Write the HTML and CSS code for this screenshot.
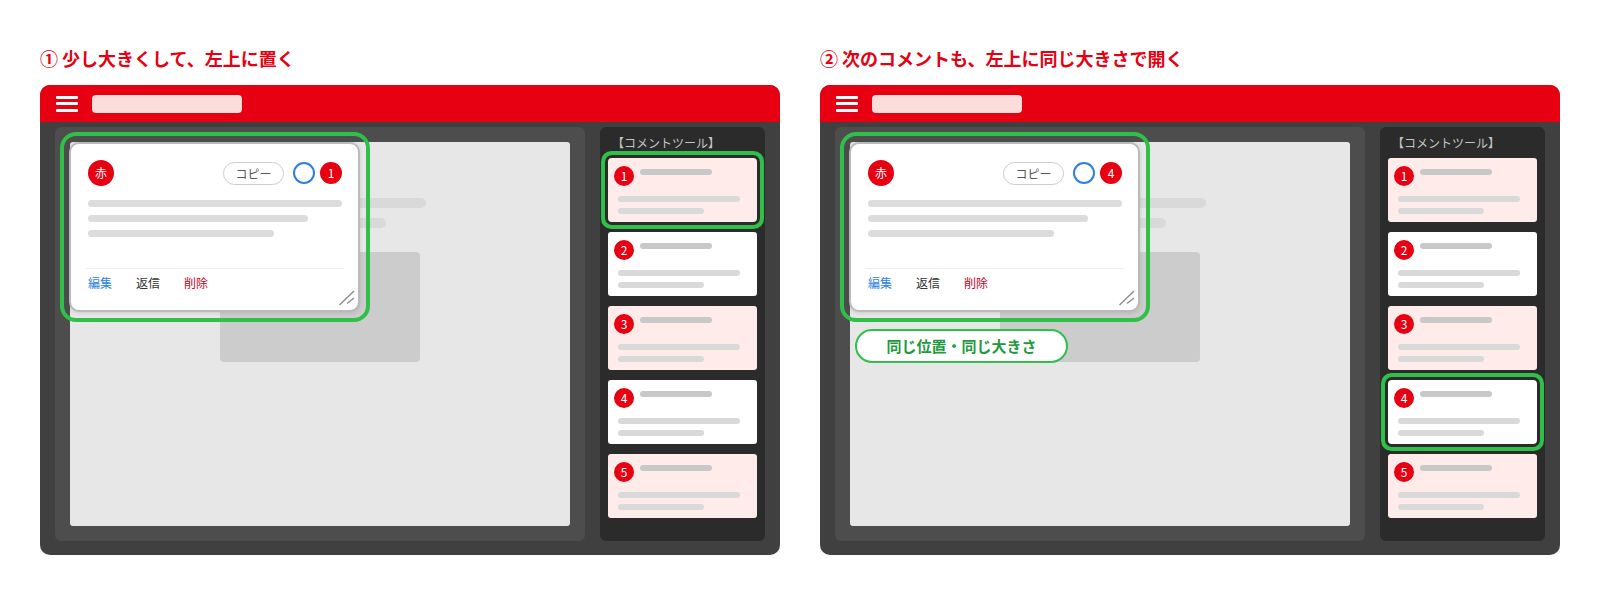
FILE: index.html
```html
<!DOCTYPE html>
<html lang="ja">
  <head>
    <meta charset="UTF-8" />
    <title>コメントツール</title>
    <link rel="stylesheet" href="styles.css">
  </head>
  <body>
    <div class="steps">
      <!-- step 1 -->
      <section class="step">
        <h2 class="step-title">① 少し大きくして、左上に置く</h2>
        <div class="frame">
          <header class="topbar">
            <div class="burger"><span></span><span></span><span></span></div>
            <div class="search"></div>
          </header>
          <div class="workspace">
            <main class="main">
              <div class="page">
                <div class="page-line page-line-a"></div>
                <div class="page-line page-line-b"></div>
                <div class="page-block"></div>
              </div>
              <div class="highlight">
                <div class="popup">
                  <div class="popup-head">
                    <span class="avatar">赤</span>
                    <span class="copy">コピー</span>
                    <span class="ring"></span>
                    <span class="badge badge-big">1</span>
                  </div>
                  <div class="popup-line popup-line-a"></div>
                  <div class="popup-line popup-line-b"></div>
                  <div class="popup-line popup-line-c"></div>
                  <div class="popup-rule"></div>
                  <div class="actions">
                    <span class="act-edit">編集</span>
                    <span class="act-reply">返信</span>
                    <span class="act-delete">削除</span>
                  </div>
                  <svg class="grip" width="16" height="16" viewBox="0 0 16 16">
                    <path d="M0.5 15L15 1M8 13.5L15 8" stroke="#8f8f8f" stroke-width="1.5" fill="none" />
                  </svg>
                </div>
              </div>
            </main>
            <aside class="sidebar">
              <div class="sidebar-title">【コメントツール】</div>
              <div class="card pink active">
                <span class="badge">1</span><div class="card-head"></div>
                <div class="card-line"></div><div class="card-line short"></div>
              </div>
              <div class="card">
                <span class="badge">2</span><div class="card-head"></div>
                <div class="card-line"></div><div class="card-line short"></div>
              </div>
              <div class="card pink">
                <span class="badge">3</span><div class="card-head"></div>
                <div class="card-line"></div><div class="card-line short"></div>
              </div>
              <div class="card">
                <span class="badge">4</span><div class="card-head"></div>
                <div class="card-line"></div><div class="card-line short"></div>
              </div>
              <div class="card pink">
                <span class="badge">5</span><div class="card-head"></div>
                <div class="card-line"></div><div class="card-line short"></div>
              </div>
            </aside>
          </div>
        </div>
      </section>

      <!-- step 2 -->
      <section class="step">
        <h2 class="step-title">② 次のコメントも、左上に同じ大きさで開く</h2>
        <div class="frame">
          <header class="topbar">
            <div class="burger"><span></span><span></span><span></span></div>
            <div class="search"></div>
          </header>
          <div class="workspace">
            <main class="main">
              <div class="page">
                <div class="page-line page-line-a"></div>
                <div class="page-line page-line-b"></div>
                <div class="page-block"></div>
              </div>
              <div class="highlight">
                <div class="popup">
                  <div class="popup-head">
                    <span class="avatar">赤</span>
                    <span class="copy">コピー</span>
                    <span class="ring"></span>
                    <span class="badge badge-big">4</span>
                  </div>
                  <div class="popup-line popup-line-a"></div>
                  <div class="popup-line popup-line-b"></div>
                  <div class="popup-line popup-line-c"></div>
                  <div class="popup-rule"></div>
                  <div class="actions">
                    <span class="act-edit">編集</span>
                    <span class="act-reply">返信</span>
                    <span class="act-delete">削除</span>
                  </div>
                  <svg class="grip" width="16" height="16" viewBox="0 0 16 16">
                    <path d="M0.5 15L15 1M8 13.5L15 8" stroke="#8f8f8f" stroke-width="1.5" fill="none" />
                  </svg>
                </div>
              </div>
              <div class="same-label">同じ位置・同じ大きさ</div>
            </main>
            <aside class="sidebar">
              <div class="sidebar-title">【コメントツール】</div>
              <div class="card pink">
                <span class="badge">1</span><div class="card-head"></div>
                <div class="card-line"></div><div class="card-line short"></div>
              </div>
              <div class="card">
                <span class="badge">2</span><div class="card-head"></div>
                <div class="card-line"></div><div class="card-line short"></div>
              </div>
              <div class="card pink">
                <span class="badge">3</span><div class="card-head"></div>
                <div class="card-line"></div><div class="card-line short"></div>
              </div>
              <div class="card active">
                <span class="badge">4</span><div class="card-head"></div>
                <div class="card-line"></div><div class="card-line short"></div>
              </div>
              <div class="card pink">
                <span class="badge">5</span><div class="card-head"></div>
                <div class="card-line"></div><div class="card-line short"></div>
              </div>
            </aside>
          </div>
        </div>
      </section>
    </div>
  </body>
</html>
```
FILE: styles.css
```css
:root {
  --red: #e60012;
  --green: #30c04a;
  --sidebar: #2b2b2b;
}
* {
  margin: 0;
  padding: 0;
  box-sizing: border-box;
}
body {
  font-family: "Noto Sans CJK JP", "Noto Sans", sans-serif;
  background: #ffffff;
  color: #333333;
}
.steps {
  display: flex;
  gap: 40px;
  padding: 45px 40px 0;
}
.step {
  width: 740px;
}
.step-title {
  color: var(--red);
  font-size: 18px;
  font-weight: 700;
  line-height: 26px;
  margin-bottom: 14px;
}
.frame {
  height: 470px;
  background: #404040;
  border-radius: 10px;
  overflow: hidden;
}
.topbar {
  height: 37px;
  background: var(--red);
  display: flex;
  align-items: center;
  padding-left: 16px;
  gap: 14px;
}
.burger {
  width: 22px;
  display: flex;
  flex-direction: column;
  gap: 3.5px;
}
.burger span {
  height: 3px;
  background: #ffffff;
  border-radius: 1px;
}
.search {
  width: 150px;
  height: 18px;
  background: #fddcdc;
  border-radius: 4px;
}
.workspace {
  display: flex;
  gap: 15px;
  padding: 5px 15px 14px;
}
.main {
  position: relative;
  width: 530px;
  height: 414px;
  background: #4d4d4d;
  border-radius: 6px;
  padding: 15px;
}
.page {
  height: 384px;
  background: #e7e7e7;
  border-radius: 3px;
  padding: 56px 0 0 150px;
}
.page-line {
  height: 10px;
  background: #d9d9d9;
  border-radius: 5px;
  margin-bottom: 10px;
}
.page-line-a {
  width: 206px;
}
.page-line-b {
  width: 166px;
}
.page-block {
  width: 200px;
  height: 110px;
  margin-top: 24px;
  background: #cccccc;
  border-radius: 4px;
}
.highlight {
  position: absolute;
  left: 5px;
  top: 5px;
  width: 310px;
  height: 190px;
  border: 4px solid var(--green);
  border-radius: 16px;
  padding: 6px 5px;
}
.popup {
  position: relative;
  width: 291px;
  height: 170px;
  background: #ffffff;
  border: 2px solid #bababa;
  border-radius: 10px;
  box-shadow: 0 1px 4px rgba(0, 0, 0, 0.12);
  padding: 16px 16px 0 17px;
}
.popup-head {
  display: flex;
  align-items: center;
  height: 26px;
}
.avatar {
  width: 26px;
  height: 26px;
  border-radius: 50%;
  background: var(--red);
  color: #ffffff;
  font-size: 12px;
  line-height: 26px;
  text-align: center;
  margin-right: auto;
}
.copy {
  width: 61px;
  height: 23px;
  border: 1px solid #cccccc;
  border-radius: 12px;
  font-size: 12px;
  line-height: 21px;
  text-align: center;
  color: #555555;
}
.ring {
  width: 22px;
  height: 22px;
  border: 2px solid #2f7fe0;
  border-radius: 50%;
  margin: 0 5px 0 9px;
}
.badge {
  display: block;
  width: 20px;
  height: 20px;
  border-radius: 50%;
  background: var(--red);
  color: #ffffff;
  font-size: 12px;
  line-height: 20px;
  text-align: center;
}
.badge-big {
  width: 22px;
  height: 22px;
  line-height: 22px;
}
.popup-line {
  height: 7px;
  background: #dcdcdc;
  border-radius: 4px;
  margin-top: 8px;
}
.popup-line-a {
  width: 254px;
  margin-top: 14px;
}
.popup-line-b {
  width: 220px;
}
.popup-line-c {
  width: 186px;
}
.popup-rule {
  height: 1px;
  background: #eeeeee;
  margin: 31px -2px 0;
}
.actions {
  display: flex;
  gap: 24px;
  margin-top: 5px;
  font-size: 12px;
  line-height: 18px;
}
.act-edit {
  color: #2f7fe0;
}
.act-reply {
  color: #333333;
}
.act-delete {
  color: #d0021b;
}
.grip {
  position: absolute;
  right: 3px;
  bottom: 4px;
}
.same-label {
  position: absolute;
  left: 20px;
  top: 202px;
  width: 213px;
  height: 34px;
  background: #ffffff;
  border: 2.5px solid var(--green);
  border-radius: 17px;
  color: #1f9a3f;
  font-size: 15px;
  font-weight: 700;
  line-height: 29px;
  text-align: center;
}
.sidebar {
  width: 165px;
  height: 414px;
  background: var(--sidebar);
  border-radius: 6px;
  padding: 7px 8px 0;
}
.sidebar-title {
  color: #c4c4c4;
  font-size: 12px;
  line-height: 18px;
  margin: 0 0 6px 4px;
}
.card {
  position: relative;
  height: 64px;
  background: #ffffff;
  border-radius: 3px;
  margin-bottom: 10px;
  padding: 11px 0 0 32px;
}
.card.pink {
  background: #ffecea;
}
.card.active {
  box-shadow: 0 0 0 3px var(--sidebar), 0 0 0 7px var(--green);
  border-radius: 4px;
  z-index: 1;
}
.card .badge {
  position: absolute;
  left: 6px;
  top: 8px;
}
.card-head {
  width: 72px;
  height: 6px;
  background: #c8c8c8;
  border-radius: 3px;
  margin-bottom: 21px;
}
.card-line {
  width: 122px;
  height: 6px;
  background: #d9d9d9;
  border-radius: 3px;
  margin: 0 0 6px -22px;
}
.card-line.short {
  width: 86px;
}
```
